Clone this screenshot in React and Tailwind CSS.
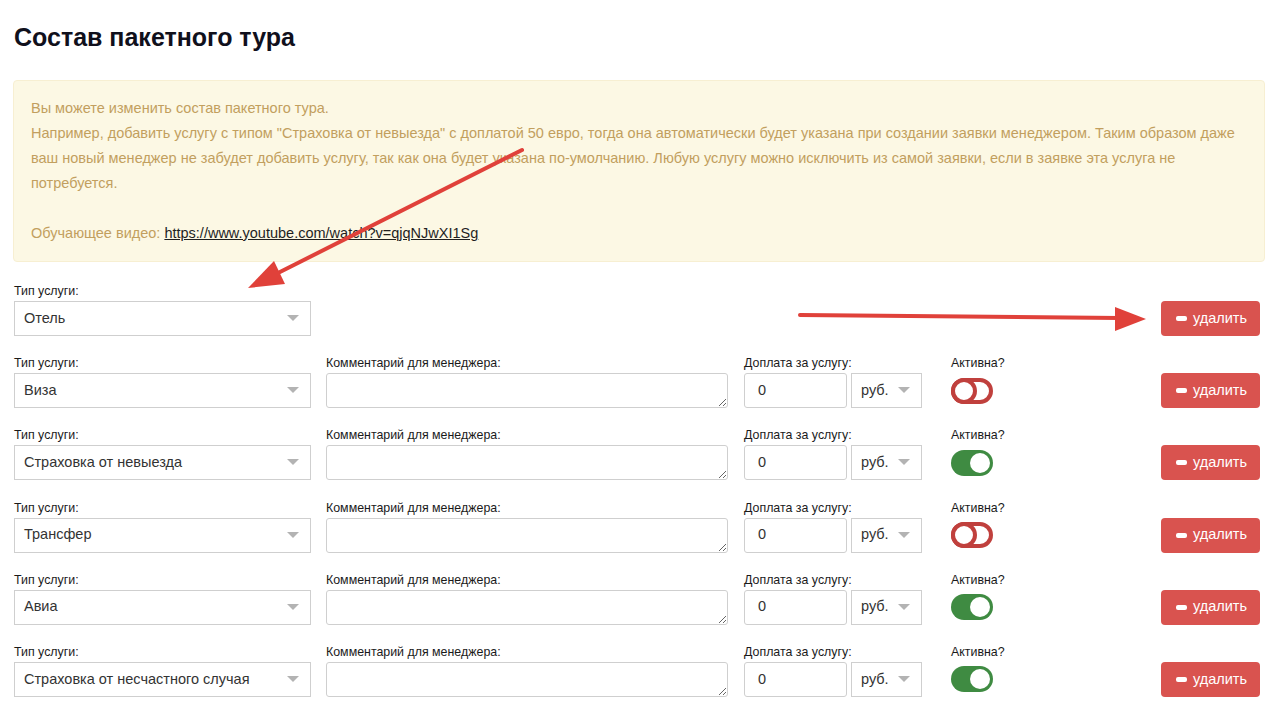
const services = [
  { type: "Отель", short: true },
  { type: "Виза", active: false },
  { type: "Страховка от невыезда", active: true },
  { type: "Трансфер", active: false },
  { type: "Авиа", active: true },
  { type: "Страховка от несчастного случая", active: true },
];

function Caret() {
  return (
    <svg width="12" height="7" viewBox="0 0 12 7" className="shrink-0">
      <polygon points="0,0 12,0 6,6" fill="#b3b3b3" />
    </svg>
  );
}

function Label({ children }) {
  return <div className="text-[12.4px] leading-[15px] text-[#1a1a1a] mb-[2px]">{children}</div>;
}

function FakeSelect({ value, className }) {
  return (
    <div
      className={`h-[35px] flex items-center justify-between border border-[#cfcfcf] bg-white pl-[9px] pr-[11px] text-[14.5px] text-[#333] ${className}`}
    >
      <span>{value}</span>
      <Caret />
    </div>
  );
}

function Toggle({ on }) {
  if (on) {
    return (
      <div className="relative w-[42px] h-[26px] rounded-full bg-[#3f8b42]">
        <div className="absolute right-[3px] top-[3px] w-[20px] h-[20px] rounded-full bg-white" />
      </div>
    );
  }
  return (
    <div className="relative w-[42px] h-[26px]">
      <div className="absolute inset-0 rounded-full border-[4px] border-[#c0403d] bg-white" />
      <div className="absolute left-0 top-0 w-[26px] h-[26px] rounded-full border-[4px] border-[#c0403d] bg-white" />
    </div>
  );
}

function DeleteButton() {
  return (
    <button className="h-[35px] w-[99px] rounded-[4px] bg-[#d9534f] text-white text-[14.5px] flex items-center justify-center gap-[6px] pl-[2px]">
      <span className="block w-[11px] h-[5px] rounded-[2px] bg-white" />
      <span>удалить</span>
    </button>
  );
}

function ServiceRow({ item }) {
  return (
    <div className="flex items-end ml-[1px] mr-[5px]">
      <div className="w-[297px]">
        <Label>Тип услуги:</Label>
        <FakeSelect value={item.type} className="w-[297px]" />
      </div>

      {!item.short && (
        <>
          <div className="w-[402px] ml-[15px]">
            <Label>Комментарий для менеджера:</Label>
            <textarea className="block w-[402px] h-[35px] rounded-[3px] border border-[#cfcfcf] bg-white text-[14px] outline-none" />
          </div>

          <div className="ml-[16px]">
            <Label>Доплата за услугу:</Label>
            <div className="flex gap-[4px]">
              <div className="w-[103px] h-[35px] rounded-[3px] border border-[#cfcfcf] bg-white flex items-center pl-[13px] text-[14.5px] text-[#333]">
                0
              </div>
              <FakeSelect value="руб." className="w-[71px]" />
            </div>
          </div>

          <div className="ml-[29px]">
            <Label>Активна?</Label>
            <div className="h-[35px] flex items-center">
              <Toggle on={item.active} />
            </div>
          </div>
        </>
      )}

      <div className="ml-auto">
        <DeleteButton />
      </div>
    </div>
  );
}

export default function App() {
  return (
    <div className="relative min-h-[708px] bg-white pl-[13px] pr-[15px] pt-[23px] font-['Liberation_Sans',Arial,sans-serif]">
      <h1 className="pl-[1px] text-[25px] leading-[28px] font-bold text-[#10101c]">Состав пакетного тура</h1>

      {/* Подсказка */}
      <div className="mt-[29px] rounded-[4px] border border-[#f7efd2] bg-[#fcf8e4] pl-[17px] pr-[10px] py-[15px] text-[14.5px] leading-[25px] text-[#c29f5e] whitespace-nowrap">
        <p>
          Вы можете изменить состав пакетного тура.
          <br />
          Например, добавить услугу с типом "Страховка от невыезда" с доплатой 50 евро, тогда она автоматически будет
          указана при создании заявки менеджером. Таким образом даже
          <br />
          ваш новый менеджер не забудет добавить услугу, так как она будет указана по-умолчанию. Любую услугу можно
          исключить из самой заявки, если в заявке эта услуга не
          <br />
          потребуется.
        </p>
        <p className="mt-[25px]">
          Обучающее видео:{" "}
          <a href="#" className="text-[#1f1f1f] underline">
            https://www.youtube.com/watch?v=qjqNJwXI1Sg
          </a>
        </p>
      </div>

      <div className="mt-[22px] flex flex-col gap-[20.2px]">
        {services.map((s, i) => (
          <ServiceRow key={i} item={s} />
        ))}
      </div>

      {/* стрелки-пометки поверх формы */}
      <svg className="absolute left-0 top-0 pointer-events-none" width="1280" height="708">
        <line x1="522" y1="150" x2="276" y2="274" stroke="#e0413a" strokeWidth="4" strokeLinecap="round" />
        <polygon points="248,288 285,284 274,261" fill="#e0413a" />
        <line x1="800" y1="315" x2="1120" y2="318" stroke="#e0413a" strokeWidth="4" strokeLinecap="round" />
        <polygon points="1146,319 1115,307 1115,331" fill="#e0413a" />
      </svg>
    </div>
  );
}
